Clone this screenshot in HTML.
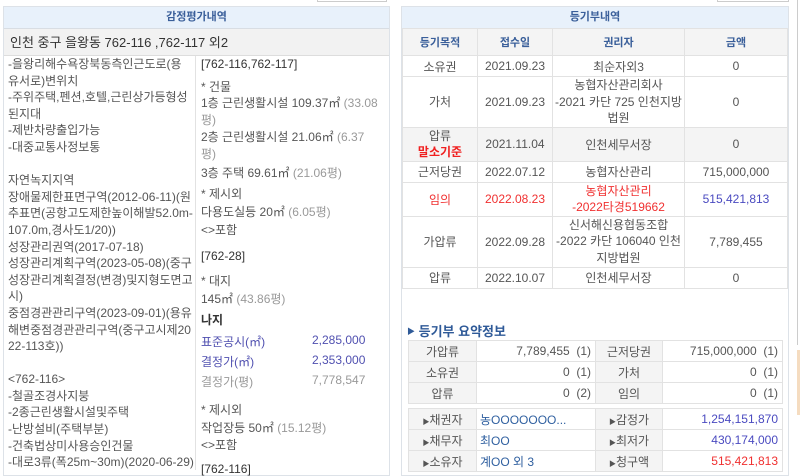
<!DOCTYPE html>
<html><head><meta charset="utf-8"><style>
*{margin:0;padding:0;box-sizing:border-box}
body{width:800px;height:470px;overflow:hidden;background:#fff;font-family:"Liberation Sans","Noto Sans CJK KR",sans-serif;font-size:12px;color:#555;position:relative}
.p{position:absolute;border:1px solid #dde2e8;background:#fff}
.t{position:absolute;white-space:nowrap}
.hd{position:absolute;background:#e8f1fb;border-bottom:1px solid #d8dde3;color:#3a5f9a;text-align:center;font-weight:bold;font-size:11px}
table{border-collapse:collapse;position:absolute}
td{border:1px solid #e2e2e2;text-align:center;font-size:12px;color:#555;padding:0}
.g{background:#f4f4f4}
.bl{color:#4a4ac0}.rd{color:#f03030}.lb{color:#3060a0}
</style></head><body>
<div style="position:absolute;left:317px;top:0;width:70px;height:2px;border:1px solid #ccc;border-top:none"></div>
<div style="position:absolute;left:717px;top:0;width:72px;height:2px;border:1px solid #ccc;border-top:none"></div>
<div style="position:absolute;left:797px;top:0;width:3px;height:345px;border-left:1px solid #ccc"></div>
<div style="position:absolute;left:797px;top:350px;width:3px;height:65px;background:#f5dcc0"></div>

<div class="p" style="left:3px;top:6px;width:387px;height:470px"></div>
<div class="hd" style="left:4px;top:7px;width:385px;height:22px;line-height:21px">감정평가내역</div>
<div style="position:absolute;left:4px;top:29px;width:385px;height:27px;background:#f2f2f2;border-bottom:1px solid #ddd;font-size:13px;color:#333;line-height:27px;padding-left:6px">인천 중구 을왕동 762-116 ,762-117 외2</div>
<div style="position:absolute;left:195px;top:56px;width:1px;height:414px;background:#e2e2e2"></div>
<div class="t" style="left:8px;top:56px;line-height:16.6px">-을왕리해수욕장북동측인근도로(용<br>유서로)변위치<br>-주위주택,펜션,호텔,근린상가등형성<br>된지대<br>-제반차량출입가능<br>-대중교통사정보통<br><br>자연녹지지역<br>장애물제한표면구역(2012-06-11)(원<br>추표면(공항고도제한높이해발52.0m-<br>107.0m,경사도1/20))<br>성장관리권역(2017-07-18)<br>성장관리계획구역(2023-05-08)(중구<br>성장관리계획결정(변경)및지형도면고<br>시)<br>중점경관관리구역(2023-09-01)(용유<br>해변중점경관관리구역(중구고시제20<br>22-113호))<br><br>&lt;762-116&gt;<br>-철골조경사지붕<br>-2종근린생활시설및주택<br>-난방설비(주택부분)<br>-건축법상미사용승인건물<br>-대로3류(폭25m~30m)(2020-06-29)</div>
<div class="t" style="left:201px;top:57px;color:#333">[762-116,762-117]</div>
<div class="t" style="left:201px;top:78px">* 건물</div>
<div class="t" style="left:201px;top:95px;line-height:16.5px">1층 근린생활시설 109.37㎡ <span style="color:#999">(33.08</span><br><span style="color:#999">평)</span></div>
<div class="t" style="left:201px;top:129px;line-height:16.5px">2층 근린생활시설 21.06㎡ <span style="color:#999">(6.37</span><br><span style="color:#999">평)</span></div>
<div class="t" style="left:201px;top:164px">3층 주택 69.61㎡ <span style="color:#999">(21.06평)</span></div>
<div class="t" style="left:201px;top:185px">* 제시외</div>
<div class="t" style="left:201px;top:203px">다용도실등 20㎡ <span style="color:#999">(6.05평)</span></div>
<div class="t" style="left:201px;top:221px">&lt;&gt;포함</div>
<div class="t" style="left:201px;top:249px;color:#333">[762-28]</div>
<div class="t" style="left:201px;top:272px">* 대지</div>
<div class="t" style="left:201px;top:290px">145㎡ <span style="color:#999">(43.86평)</span></div>
<div class="t" style="left:201px;top:311px;color:#333;font-weight:bold">나지</div>
<div class="t bl" style="left:201px;top:333px;color:#5050b0">표준공시(㎡)</div><div class="t" style="left:312px;top:333px;color:#5050b0">2,285,000</div>
<div class="t" style="left:201px;top:353px;color:#5050b0">결정가(㎡)</div><div class="t" style="left:312px;top:353px;color:#5050b0">2,353,000</div>
<div class="t" style="left:201px;top:373px;color:#999">결정가(평)</div><div class="t" style="left:312px;top:373px;color:#999">7,778,547</div>
<div class="t" style="left:201px;top:401px">* 제시외</div>
<div class="t" style="left:201px;top:419px">작업장등 50㎡ <span style="color:#999">(15.12평)</span></div>
<div class="t" style="left:201px;top:436px">&lt;&gt;포함</div>
<div class="t" style="left:201px;top:462px;color:#333">[762-116]</div>

<div class="p" style="left:401px;top:6px;width:388px;height:470px"></div>
<div class="hd" style="left:402px;top:7px;width:386px;height:22px;line-height:21px">등기부내역</div>
<table style="left:402px;top:28px;width:386px">
<tr class="g" style="height:27px"><td style="width:75px;color:#3a5f9a;font-weight:bold;font-size:11px">등기목적</td><td style="width:75px;color:#3a5f9a;font-weight:bold;font-size:11px">접수일</td><td style="width:132px;color:#3a5f9a;font-weight:bold;font-size:11px">권리자</td><td style="color:#3a5f9a;font-weight:bold;font-size:11px">금액</td></tr>
<tr style="height:21px"><td>소유권</td><td>2021.09.23</td><td>최순자외3</td><td>0</td></tr>
<tr style="height:50px"><td>가처</td><td>2021.09.23</td><td style="line-height:16.5px">농협자산관리회사<br>-2021 카단 725 인천지방<br>법원</td><td>0</td></tr>
<tr class="g" style="height:34px"><td style="line-height:16px">압류<br><b style="color:#f02020">말소기준</b></td><td>2021.11.04</td><td>인천세무서장</td><td>0</td></tr>
<tr style="height:21px"><td>근저당권</td><td>2022.07.12</td><td>농협자산관리</td><td>715,000,000</td></tr>
<tr style="height:34px"><td class="rd">임의</td><td class="rd">2022.08.23</td><td class="rd" style="line-height:16px">농협자산관리<br>-2022타경519662</td><td class="bl">515,421,813</td></tr>
<tr style="height:51px"><td>가압류</td><td>2022.09.28</td><td style="line-height:16.5px">신서해신용협동조합<br>-2022 카단 106040 인천<br>지방법원</td><td>7,789,455</td></tr>
<tr style="height:21px"><td>압류</td><td>2022.10.07</td><td>인천세무서장</td><td>0</td></tr>
</table>
<div class="t" style="left:407px;top:321px;color:#2f5a98;font-weight:bold;font-size:13px"><span style="font-size:8px;vertical-align:2px">▶</span> 등기부 요약정보</div>
<table style="left:408px;top:340px;width:375px">
<tr style="height:21px"><td class="g" style="width:68px">가압류</td><td style="width:119px;text-align:right;padding-right:4px">7,789,455 &nbsp;(1)</td><td class="g" style="width:67px">근저당권</td><td style="text-align:right;padding-right:4px">715,000,000 &nbsp;(1)</td></tr>
<tr style="height:21px"><td class="g">소유권</td><td style="text-align:right;padding-right:4px">0 &nbsp;(1)</td><td class="g">가처</td><td style="text-align:right;padding-right:4px">0 &nbsp;(1)</td></tr>
<tr style="height:21px"><td class="g">압류</td><td style="text-align:right;padding-right:4px">0 &nbsp;(2)</td><td class="g">임의</td><td style="text-align:right;padding-right:4px">0 &nbsp;(1)</td></tr>
</table>
<table style="left:408px;top:408px;width:375px">
<tr style="height:21px"><td class="g" style="width:68px"><span style="font-size:7px">▶</span>채권자</td><td class="lb" style="width:119px;text-align:left;padding-left:3px">농OOOOOOO...</td><td class="g" style="width:67px"><span style="font-size:7px">▶</span>감정가</td><td class="bl" style="text-align:right;padding-right:4px">1,254,151,870</td></tr>
<tr style="height:21px"><td class="g"><span style="font-size:7px">▶</span>채무자</td><td class="lb" style="text-align:left;padding-left:3px">최OO</td><td class="g"><span style="font-size:7px">▶</span>최저가</td><td class="bl" style="text-align:right;padding-right:4px">430,174,000</td></tr>
<tr style="height:21px"><td class="g"><span style="font-size:7px">▶</span>소유자</td><td class="lb" style="text-align:left;padding-left:3px">계OO 외 3</td><td class="g"><span style="font-size:7px">▶</span>청구액</td><td class="rd" style="text-align:right;padding-right:4px">515,421,813</td></tr>
</table>
</body></html>
